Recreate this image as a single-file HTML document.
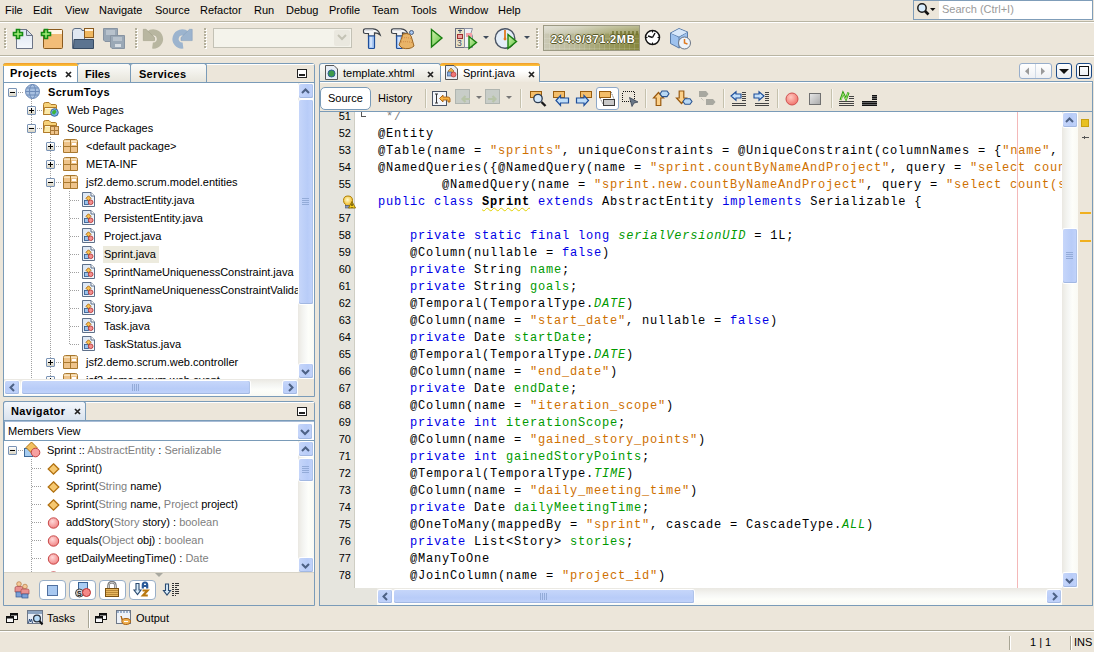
<!DOCTYPE html>
<html><head><meta charset="utf-8">
<style>
*{box-sizing:border-box;margin:0;padding:0}
html,body{width:1094px;height:652px;overflow:hidden;background:#ECE6DA;font-family:"Liberation Sans",sans-serif;font-size:11px;color:#000}
.a{position:absolute}
.t{position:absolute;white-space:nowrap;line-height:13px}
.c{position:absolute;white-space:pre;font-family:"Liberation Mono",monospace;font-size:12px;letter-spacing:0.8px;line-height:17px;color:#000}
.k{color:#0000E6}
.s{color:#CE7000}
.f{color:#009900}
.i{color:#009900;font-style:italic}
.g{color:#808080}
svg{position:absolute;overflow:visible}
</style></head><body>

<div class="t" style="left:5px;top:4px;">File</div>
<div class="t" style="left:33px;top:4px;">Edit</div>
<div class="t" style="left:65px;top:4px;">View</div>
<div class="t" style="left:99px;top:4px;">Navigate</div>
<div class="t" style="left:155px;top:4px;">Source</div>
<div class="t" style="left:200px;top:4px;">Refactor</div>
<div class="t" style="left:254px;top:4px;">Run</div>
<div class="t" style="left:286px;top:4px;">Debug</div>
<div class="t" style="left:329px;top:4px;">Profile</div>
<div class="t" style="left:372px;top:4px;">Team</div>
<div class="t" style="left:411px;top:4px;">Tools</div>
<div class="t" style="left:449px;top:4px;">Window</div>
<div class="t" style="left:498px;top:4px;">Help</div>
<div class="a" style="left:0px;top:21px;width:1094px;height:1px;background:#B9B5A3"></div>
<div class="a" style="left:0px;top:22px;width:1094px;height:1px;background:#FFFFFF"></div>
<div class="a" style="left:913px;top:0px;width:180px;height:20px;background:#fff;border:1px solid #7F9DB9"></div>
<div class="a" style="left:914px;top:1px;width:25px;height:18px;background:#ECE6DA"></div>
<svg style="left:916px;top:2px" width="22" height="15"><path d="M8.5 8.5 L12.5 12.5" stroke="#111" stroke-width="2.6"/><circle cx="6" cy="6" r="4.2" fill="#D8ECFC" stroke="#1A1A1A" stroke-width="1.5"/><path d="M14 6 H19.5 L16.75 9Z" fill="#111"/></svg>
<div class="t" style="left:942px;top:3px;color:#9A9A9A">Search (Ctrl+I)</div>
<div class="a" style="left:0px;top:55px;width:1094px;height:1px;background:#B9B5A3"></div>
<div class="a" style="left:0px;top:56px;width:1094px;height:1px;background:#FFFFFF"></div>
<div class="a" style="left:4px;top:28px;width:2px;height:2px;background:#B4B09C;box-shadow:1px 1px 0 #fff"></div>
<div class="a" style="left:4px;top:31px;width:2px;height:2px;background:#B4B09C;box-shadow:1px 1px 0 #fff"></div>
<div class="a" style="left:4px;top:34px;width:2px;height:2px;background:#B4B09C;box-shadow:1px 1px 0 #fff"></div>
<div class="a" style="left:4px;top:37px;width:2px;height:2px;background:#B4B09C;box-shadow:1px 1px 0 #fff"></div>
<div class="a" style="left:4px;top:40px;width:2px;height:2px;background:#B4B09C;box-shadow:1px 1px 0 #fff"></div>
<div class="a" style="left:4px;top:43px;width:2px;height:2px;background:#B4B09C;box-shadow:1px 1px 0 #fff"></div>
<div class="a" style="left:4px;top:46px;width:2px;height:2px;background:#B4B09C;box-shadow:1px 1px 0 #fff"></div>
<div class="a" style="left:135px;top:28px;width:2px;height:2px;background:#B4B09C;box-shadow:1px 1px 0 #fff"></div>
<div class="a" style="left:135px;top:31px;width:2px;height:2px;background:#B4B09C;box-shadow:1px 1px 0 #fff"></div>
<div class="a" style="left:135px;top:34px;width:2px;height:2px;background:#B4B09C;box-shadow:1px 1px 0 #fff"></div>
<div class="a" style="left:135px;top:37px;width:2px;height:2px;background:#B4B09C;box-shadow:1px 1px 0 #fff"></div>
<div class="a" style="left:135px;top:40px;width:2px;height:2px;background:#B4B09C;box-shadow:1px 1px 0 #fff"></div>
<div class="a" style="left:135px;top:43px;width:2px;height:2px;background:#B4B09C;box-shadow:1px 1px 0 #fff"></div>
<div class="a" style="left:135px;top:46px;width:2px;height:2px;background:#B4B09C;box-shadow:1px 1px 0 #fff"></div>
<div class="a" style="left:204px;top:28px;width:2px;height:2px;background:#B4B09C;box-shadow:1px 1px 0 #fff"></div>
<div class="a" style="left:204px;top:31px;width:2px;height:2px;background:#B4B09C;box-shadow:1px 1px 0 #fff"></div>
<div class="a" style="left:204px;top:34px;width:2px;height:2px;background:#B4B09C;box-shadow:1px 1px 0 #fff"></div>
<div class="a" style="left:204px;top:37px;width:2px;height:2px;background:#B4B09C;box-shadow:1px 1px 0 #fff"></div>
<div class="a" style="left:204px;top:40px;width:2px;height:2px;background:#B4B09C;box-shadow:1px 1px 0 #fff"></div>
<div class="a" style="left:204px;top:43px;width:2px;height:2px;background:#B4B09C;box-shadow:1px 1px 0 #fff"></div>
<div class="a" style="left:204px;top:46px;width:2px;height:2px;background:#B4B09C;box-shadow:1px 1px 0 #fff"></div>
<div class="a" style="left:536px;top:28px;width:2px;height:2px;background:#B4B09C;box-shadow:1px 1px 0 #fff"></div>
<div class="a" style="left:536px;top:31px;width:2px;height:2px;background:#B4B09C;box-shadow:1px 1px 0 #fff"></div>
<div class="a" style="left:536px;top:34px;width:2px;height:2px;background:#B4B09C;box-shadow:1px 1px 0 #fff"></div>
<div class="a" style="left:536px;top:37px;width:2px;height:2px;background:#B4B09C;box-shadow:1px 1px 0 #fff"></div>
<div class="a" style="left:536px;top:40px;width:2px;height:2px;background:#B4B09C;box-shadow:1px 1px 0 #fff"></div>
<div class="a" style="left:536px;top:43px;width:2px;height:2px;background:#B4B09C;box-shadow:1px 1px 0 #fff"></div>
<div class="a" style="left:536px;top:46px;width:2px;height:2px;background:#B4B09C;box-shadow:1px 1px 0 #fff"></div>
<svg style="left:12px;top:28px" width="22" height="22"><defs><linearGradient id="pg" x1="0" y1="0" x2="0" y2="1"><stop offset="0" stop-color="#DCE4F2"/><stop offset="1" stop-color="#F4F7FB"/></linearGradient></defs><path d="M4.5 1.5 H14.5 L20.5 7.5 V20.5 H4.5Z" fill="url(#pg)" stroke="#6C7486"/><path d="M14.5 1.5 V7.5 H20.5Z" fill="#D4DCEA" stroke="#6C7486"/><path d="M4.5 1.5 H7.5 V4.5 H10.5 V7.5 H7.5 V10.5 H4.5 V7.5 H1.5 V4.5 H4.5Z" fill="#A6EE7A" stroke="#138A13" stroke-width="1.6"/></svg>
<svg style="left:40px;top:28px" width="24" height="22"><rect x="3.5" y="1.5" width="19" height="19" rx="1" fill="#F2BD78" stroke="#8A5A1E"/><rect x="4" y="2" width="18" height="4" fill="#FFF6E6"/><path d="M4.5 1.5 H7.5 V4.5 H10.5 V7.5 H7.5 V10.5 H4.5 V7.5 H1.5 V4.5 H4.5Z" fill="#A6EE7A" stroke="#138A13" stroke-width="1.6"/></svg>
<svg style="left:72px;top:27px" width="24" height="23"><path d="M0.5 4.5 Q0.5 1.5 3 1.5 H8 Q10 1.5 10 3.5 H12.5 V21.5 H0.5Z" fill="#E0E8F2" stroke="#5E6E84"/><rect x="12.5" y="1.5" width="9" height="9" fill="#F0B860" stroke="#8A5A1E"/><rect x="13" y="2" width="8" height="2" fill="#FFF2DC"/><path d="M1.5 21.5 L2 12.5 H21.5 V21.5Z" fill="#5C7490" stroke="#364A62"/></svg>
<svg style="left:102px;top:27px" width="24" height="23"><path d="M1.5 1.5 H15.5 V14.5 H3 L1.5 13Z" fill="#9AA8B6" stroke="#8894A2"/><rect x="4" y="3" width="9" height="5" fill="#B8C2CC"/><path d="M8.5 8.5 H22.5 V21.5 H10 L8.5 20Z" fill="#9AA8B6" stroke="#8894A2"/><rect x="11" y="10" width="9" height="4" fill="#B8C2CC"/><rect x="13" y="17" width="6" height="3" fill="#D8DEE4"/></svg>
<svg style="left:142px;top:28px" width="23" height="22"><path d="M7 6 A6.6 6.6 0 1 1 10.5 17.5" fill="none" stroke="#B8B6A0" stroke-width="6.2"/><path d="M1.3 1.3 H4 L12.5 9.5 V12.6 H1.3Z" fill="#B8B6A0" stroke="#A09E86" stroke-width=".6"/></svg>
<svg style="left:171px;top:28px" width="24" height="22"><path d="M15.5 6 A6.6 6.6 0 1 0 12 17.5" fill="none" stroke="#9CB4CE" stroke-width="6.2"/><path d="M21.2 1.3 H18.5 L10 9.5 V12.6 H21.2Z" fill="#9CB4CE" stroke="#86A0BC" stroke-width=".6"/></svg>
<div class="a" style="left:213px;top:28px;width:139px;height:20px;background:#F4F3EB;border:1px solid #C3C1B5"></div>
<div class="a" style="left:334px;top:30px;width:16px;height:16px;background:#EAE8DF;border-radius:2px"></div>
<svg style="left:337px;top:34px" width="10" height="8"><path d="M1 1 L5 5 L9 1" fill="none" stroke="#C4C3B5" stroke-width="2"/></svg>
<svg style="left:362px;top:28px" width="20" height="22"><path d="M1.5 2.5 Q1.5 0.8 3.5 0.8 H11 Q16.5 1 18.2 7 Q15.5 4.6 12.5 4.8 V8 H6.5 V5.5 H3.5 Q1.5 5.5 1.5 4Z" fill="#F4F5F6" stroke="#3E434A" stroke-width="1.2"/><path d="M3 2 H11" stroke="#C8CCD2"/><path d="M6.5 8 H12.5 V19.5 Q12.5 20.5 11.5 20.5 H7.5 Q6.5 20.5 6.5 19.5Z" fill="#A8C8F4" stroke="#1E4E9A" stroke-width="1.2"/><path d="M9 9 V19" stroke="#E0ECFC" stroke-width="1.4"/></svg>
<svg style="left:390px;top:28px" width="26" height="22"><path d="M1.5 2.5 Q1.5 0.8 3.5 0.8 H11 Q16.5 1 18.2 7 Q15.5 4.6 12.5 4.8 V8 H6.5 V5.5 H3.5 Q1.5 5.5 1.5 4Z" fill="#F4F5F6" stroke="#3E434A" stroke-width="1.2"/><path d="M3 2 H11" stroke="#C8CCD2"/><path d="M6.5 8 H12.5 V19.5 Q12.5 20.5 11.5 20.5 H7.5 Q6.5 20.5 6.5 19.5Z" fill="#A8C8F4" stroke="#1E4E9A" stroke-width="1.2"/><path d="M9 9 V19" stroke="#E0ECFC" stroke-width="1.4"/><path d="M13 6 Q21 4 22 11 L24 18 Q20 22 12 20 L9 17 Q11 12 13 6Z" fill="#E8B468" stroke="#9A6420"/><path d="M12 10 Q18 9 22 11 M11 14 Q18 13 23 15" stroke="#C87838" stroke-width=".8" fill="none" stroke-dasharray="1 1"/><circle cx="21.5" cy="4.5" r="2" fill="#A8C8F0" stroke="#4A5E80"/></svg>
<svg style="left:430px;top:28px" width="14" height="21"><defs><linearGradient id="rg" x1="0" y1="0" x2="1" y2="1"><stop offset="0" stop-color="#D6F4B0"/><stop offset="1" stop-color="#5CC040"/></linearGradient></defs><path d="M1.5 1.5 L12 10 L1.5 19Z" fill="url(#rg)" stroke="#1A7E10" stroke-width="1.4"/></svg>
<svg style="left:454px;top:27px" width="26" height="23"><rect x="1.5" y="1.5" width="9" height="19" fill="#EAE4C8" stroke="#6A7080"/><path d="M10.5 1.5 H18.5 L17 6 L18.5 9 V20.5 H10.5Z" fill="#F0F2F6" stroke="#8A90A0"/><rect x="12" y="6" width="6" height="4" fill="#F4A0A8"/><rect x="3.5" y="7.5" width="5" height="4" fill="#E8A0A0" stroke="#A03030"/><path d="M6 2.5 V6 M4 3.5 H8" stroke="#3A4A6A"/><text x="3" y="19" font-size="8.5" font-family="Liberation Sans" fill="#3A4A6A">3</text><path d="M15 9.5 L22.5 15.5 L15 21.5Z" fill="url(#rg)" stroke="#1A7E10" stroke-width="1.4"/></svg>
<svg style="left:483px;top:36px" width="6" height="4"><path d="M0 0 H6 L3 3Z" fill="#3E4A5A"/></svg>
<svg style="left:494px;top:27px" width="26" height="23"><circle cx="11" cy="11.5" r="9.8" fill="#E4EEF8" stroke="#4A5464" stroke-width="1.4"/><path d="M11 3 V11.5" stroke="#E07A20" stroke-width="1.8"/><circle cx="11" cy="12" r="1.4" fill="#E07A20"/><path d="M14 7.5 L22.5 14.5 L14 21.5Z" fill="url(#rg)" stroke="#1A7E10" stroke-width="1.4"/></svg>
<svg style="left:524px;top:36px" width="6" height="4"><path d="M0 0 H6 L3 3Z" fill="#3E4A5A"/></svg>
<div class="a" style="left:543px;top:25px;width:97px;height:26px;background:linear-gradient(90deg,#CBC9B6 0%,#B9B896 35%,#9A9A5E 70%,#86863C 100%);border:1px solid #9C9A84"></div>
<div class="a" style="left:544px;top:26px;width:95px;height:7px;background:linear-gradient(rgba(255,255,255,.45),rgba(255,255,255,.2))"></div>
<div class="a" style="left:544px;top:33px;width:95px;height:17px;background:repeating-linear-gradient(90deg,rgba(255,255,255,.12) 0 1px,transparent 1px 5px),repeating-linear-gradient(rgba(255,255,255,.12) 0 1px,transparent 1px 5px)"></div>
<div class="a" style="left:612px;top:31px;width:27px;height:4px;background:repeating-linear-gradient(90deg,rgba(110,110,40,.7) 0 2px,transparent 2px 4px)"></div>
<div class="t" style="left:551px;top:33px;color:#fff;font-weight:bold;letter-spacing:0.7px;text-shadow:1px 0 0 #5A5A28,-1px 0 0 #5A5A28,0 1px 0 #5A5A28,0 -1px 0 #5A5A28">234.9/371.2MB</div>
<svg style="left:644px;top:29px" width="18" height="18"><circle cx="8.5" cy="8.5" r="7" fill="#fff" stroke="#111" stroke-width="1.5"/><path d="M8.5 8.5 L4 7 M8.5 8.5 L11 4" fill="none" stroke="#111" stroke-width="1.4"/><path d="M8.5 2 V3.5 M15 8.5 H13.5 M8.5 15 V13.5 M2 8.5 H3.5" stroke="#111"/></svg>
<svg style="left:668px;top:27px" width="24" height="23"><path d="M2.5 6 L11 1.5 L19.5 5 V16 L11 21 L2.5 16.5Z" fill="#9EC2EE" stroke="#5A7CA8"/><path d="M2.5 6 L11 10 L19.5 5 M11 10 V21" fill="none" stroke="#5A7CA8"/><path d="M3 6.2 L11 2 L19 5.2 L11 9.5Z" fill="#D8E8FA"/><circle cx="16.5" cy="16" r="6" fill="#EEF4FA" stroke="#6A7484"/><path d="M16.5 12 V16 L19.5 17" fill="none" stroke="#E07A20" stroke-width="1.5"/></svg>
<div class="a" style="left:3px;top:63px;width:312px;height:334px;border:1px solid #7A9BB8;background:#ECE6DA;border-radius:3px 3px 0 0"></div>
<div class="a" style="left:4px;top:64px;width:310px;height:1px;background:#fff"></div>
<div class="a" style="left:77px;top:63px;width:54px;height:20px;background:linear-gradient(#FBFBF9,#E6E4DA);border:1px solid #7A9BB8;border-bottom:none;border-radius:3px 3px 0 0"></div>
<div class="t" style="left:85px;top:68px;font-weight:bold">Files</div>
<div class="a" style="left:130px;top:63px;width:77px;height:20px;background:linear-gradient(#FBFBF9,#E6E4DA);border:1px solid #7A9BB8;border-bottom:none;border-radius:3px 3px 0 0"></div>
<div class="t" style="left:139px;top:68px;font-weight:bold;letter-spacing:0.25px">Services</div>
<div class="a" style="left:3px;top:63px;width:75px;height:20px;background:#fff;border:1px solid #7A9BB8;border-top:none;border-bottom:none;border-radius:3px 3px 0 0"></div>
<div class="a" style="left:3px;top:63px;width:75px;height:3px;background:linear-gradient(#EE9A2A,#FFC83C);border-radius:3px 3px 0 0"></div>
<div class="t" style="left:10px;top:67px;font-weight:bold;letter-spacing:0.5px">Projects</div>
<svg style="left:65px;top:71px" width="8" height="8"><path d="M1 1 L6 6 M6 1 L1 6" stroke="#222" stroke-width="1.7"/></svg>
<div class="a" style="left:4px;top:82px;width:310px;height:1px;background:#7A9BB8"></div>
<div class="a" style="left:297px;top:69px;width:10px;height:9px;border:1px solid #222;background:#fff"></div>
<div class="a" style="left:299px;top:74px;width:6px;height:2px;background:#222"></div>
<div class="a" style="left:4px;top:83px;width:294px;height:296px;background:#fff"></div>
<div class="a" style="left:31px;top:99px;width:1px;height:280px;background:repeating-linear-gradient(#A0A0A0 0 1px,transparent 1px 2px)"></div>
<div class="a" style="left:50px;top:137px;width:1px;height:243px;background:repeating-linear-gradient(#A0A0A0 0 1px,transparent 1px 2px)"></div>
<div class="a" style="left:69px;top:191px;width:1px;height:153px;background:repeating-linear-gradient(#A0A0A0 0 1px,transparent 1px 2px)"></div>
<div class="a" style="left:8px;top:88px;width:9px;height:9px;border:1px solid #7A93B5;background:linear-gradient(#fff,#D8D4C4);border-radius:1px"></div>
<div class="a" style="left:10px;top:92px;width:5px;height:1px;background:#000"></div>
<div class="a" style="left:18px;top:92px;width:6px;height:1px;background:repeating-linear-gradient(90deg,#A0A0A0 0 1px,transparent 1px 2px)"></div>
<svg style="left:25px;top:84px" width="16" height="15"><circle cx="7.5" cy="7.5" r="7" fill="#A8C0E0" stroke="#6D8BB8"/><ellipse cx="7.5" cy="7.5" rx="3" ry="7" fill="none" stroke="#6D8BB8"/><path d="M0.5 7.5 H14.5 M1.5 4 H13.5 M1.5 11 H13.5" stroke="#6D8BB8"/></svg>
<div class="t" style="left:48px;top:86px;font-weight:bold;letter-spacing:0.3px">ScrumToys</div>
<div class="a" style="left:27px;top:106px;width:9px;height:9px;border:1px solid #7A93B5;background:linear-gradient(#fff,#D8D4C4);border-radius:1px"></div>
<div class="a" style="left:29px;top:110px;width:5px;height:1px;background:#000"></div>
<div class="a" style="left:31px;top:108px;width:1px;height:5px;background:#000"></div>
<div class="a" style="left:37px;top:110px;width:5px;height:1px;background:repeating-linear-gradient(90deg,#A0A0A0 0 1px,transparent 1px 2px)"></div>
<svg style="left:43px;top:102px" width="16" height="15"><path d="M0.5 2.5 Q0.5 0.5 2.5 0.5 H6 L8 2.5 H12.5 Q13.5 2.5 13.5 4 V12.5 H0.5Z" fill="#F6D27A" stroke="#B07A28"/><path d="M1.5 5.5 H13.5 L12.5 12.5 H0.5Z" fill="#FBE9A8" stroke="#B07A28"/><path d="M2 6.5 H12.5" stroke="#FFF6D8"/></svg>
<svg style="left:50px;top:108px" width="9" height="9"><circle cx="4.5" cy="4.5" r="3.8" fill="#70B0E8" stroke="#3A6AA0"/><path d="M2 4 Q3 1.5 5.5 2 L6.5 4 L4.5 6.5 L2.5 6Z" fill="#3CB43C"/></svg>
<div class="t" style="left:67px;top:104px;">Web Pages</div>
<div class="a" style="left:27px;top:124px;width:9px;height:9px;border:1px solid #7A93B5;background:linear-gradient(#fff,#D8D4C4);border-radius:1px"></div>
<div class="a" style="left:29px;top:128px;width:5px;height:1px;background:#000"></div>
<div class="a" style="left:37px;top:128px;width:5px;height:1px;background:repeating-linear-gradient(90deg,#A0A0A0 0 1px,transparent 1px 2px)"></div>
<svg style="left:43px;top:120px" width="16" height="15"><path d="M0.5 2.5 Q0.5 0.5 2.5 0.5 H6 L8 2.5 H12.5 Q13.5 2.5 13.5 4 V12.5 H0.5Z" fill="#F6D27A" stroke="#B07A28"/><path d="M1.5 5.5 H13.5 L12.5 12.5 H0.5Z" fill="#FBE9A8" stroke="#B07A28"/><path d="M2 6.5 H12.5" stroke="#FFF6D8"/></svg>
<svg style="left:50px;top:126px" width="9" height="9"><rect x="0.5" y="0.5" width="8" height="8" fill="#EEC38A" stroke="#A87838"/><path d="M4.5 0.5 V8.5 M0.5 4.5 H8.5" stroke="#A87838"/></svg>
<div class="t" style="left:67px;top:122px;">Source Packages</div>
<div class="a" style="left:46px;top:142px;width:9px;height:9px;border:1px solid #7A93B5;background:linear-gradient(#fff,#D8D4C4);border-radius:1px"></div>
<div class="a" style="left:48px;top:146px;width:5px;height:1px;background:#000"></div>
<div class="a" style="left:50px;top:144px;width:1px;height:5px;background:#000"></div>
<div class="a" style="left:56px;top:146px;width:6px;height:1px;background:repeating-linear-gradient(90deg,#A0A0A0 0 1px,transparent 1px 2px)"></div>
<svg style="left:63px;top:139px" width="16" height="16"><path d="M0.5 2.5 Q0.5 0.5 2.5 0.5 H12.5 Q14.5 0.5 14.5 2.5 V13.5 H0.5Z" fill="#EEC38A" stroke="#A8782E"/><path d="M1 1.5 H14 V3 H1Z" fill="#F8E4C0"/><path d="M7.5 1 V13.5 M0.5 7.5 H14.5" stroke="#A8782E"/><rect x="9" y="4" width="4" height="2" fill="#fff"/></svg>
<div class="t" style="left:86px;top:140px;">&lt;default package&gt;</div>
<div class="a" style="left:46px;top:160px;width:9px;height:9px;border:1px solid #7A93B5;background:linear-gradient(#fff,#D8D4C4);border-radius:1px"></div>
<div class="a" style="left:48px;top:164px;width:5px;height:1px;background:#000"></div>
<div class="a" style="left:50px;top:162px;width:1px;height:5px;background:#000"></div>
<div class="a" style="left:56px;top:164px;width:6px;height:1px;background:repeating-linear-gradient(90deg,#A0A0A0 0 1px,transparent 1px 2px)"></div>
<svg style="left:63px;top:157px" width="16" height="16"><path d="M0.5 2.5 Q0.5 0.5 2.5 0.5 H12.5 Q14.5 0.5 14.5 2.5 V13.5 H0.5Z" fill="#EEC38A" stroke="#A8782E"/><path d="M1 1.5 H14 V3 H1Z" fill="#F8E4C0"/><path d="M7.5 1 V13.5 M0.5 7.5 H14.5" stroke="#A8782E"/><rect x="9" y="4" width="4" height="2" fill="#fff"/></svg>
<div class="t" style="left:86px;top:158px;">META-INF</div>
<div class="a" style="left:46px;top:178px;width:9px;height:9px;border:1px solid #7A93B5;background:linear-gradient(#fff,#D8D4C4);border-radius:1px"></div>
<div class="a" style="left:48px;top:182px;width:5px;height:1px;background:#000"></div>
<div class="a" style="left:56px;top:182px;width:6px;height:1px;background:repeating-linear-gradient(90deg,#A0A0A0 0 1px,transparent 1px 2px)"></div>
<svg style="left:63px;top:175px" width="16" height="16"><path d="M0.5 2.5 Q0.5 0.5 2.5 0.5 H12.5 Q14.5 0.5 14.5 2.5 V13.5 H0.5Z" fill="#EEC38A" stroke="#A8782E"/><path d="M1 1.5 H14 V3 H1Z" fill="#F8E4C0"/><path d="M7.5 1 V13.5 M0.5 7.5 H14.5" stroke="#A8782E"/><rect x="9" y="4" width="4" height="2" fill="#fff"/></svg>
<div class="t" style="left:86px;top:176px;">jsf2.demo.scrum.model.entities</div>
<div class="a" style="left:70px;top:200px;width:10px;height:1px;background:repeating-linear-gradient(90deg,#A0A0A0 0 1px,transparent 1px 2px)"></div>
<svg style="left:82px;top:192px" width="16" height="16"><defs><linearGradient id="jf" x1="0" y1="0" x2="1" y2="1"><stop offset="0" stop-color="#D8E4F4"/><stop offset="1" stop-color="#F8FAFC"/></linearGradient></defs><path d="M0.5 0.5 H9 L12.5 4 V14.5 H0.5Z" fill="url(#jf)" stroke="#5E708A"/><path d="M9 0.5 V4 H12.5" fill="#FFFFFF" stroke="#5E708A"/><rect x="2.5" y="8.5" width="4" height="4" fill="#9CC4EC" stroke="#3A6294" stroke-width=".9"/><path d="M6.5 3.8 L9 6.3 L6.5 8.8 L4 6.3Z" fill="#F8C050" stroke="#A86410" stroke-width=".9"/><circle cx="8.7" cy="10.3" r="2.3" fill="#F49090" stroke="#B83838" stroke-width=".9"/></svg>
<div class="t" style="left:104px;top:194px;">AbstractEntity.java</div>
<div class="a" style="left:70px;top:218px;width:10px;height:1px;background:repeating-linear-gradient(90deg,#A0A0A0 0 1px,transparent 1px 2px)"></div>
<svg style="left:82px;top:210px" width="16" height="16"><defs><linearGradient id="jf" x1="0" y1="0" x2="1" y2="1"><stop offset="0" stop-color="#D8E4F4"/><stop offset="1" stop-color="#F8FAFC"/></linearGradient></defs><path d="M0.5 0.5 H9 L12.5 4 V14.5 H0.5Z" fill="url(#jf)" stroke="#5E708A"/><path d="M9 0.5 V4 H12.5" fill="#FFFFFF" stroke="#5E708A"/><rect x="2.5" y="8.5" width="4" height="4" fill="#9CC4EC" stroke="#3A6294" stroke-width=".9"/><path d="M6.5 3.8 L9 6.3 L6.5 8.8 L4 6.3Z" fill="#F8C050" stroke="#A86410" stroke-width=".9"/><circle cx="8.7" cy="10.3" r="2.3" fill="#F49090" stroke="#B83838" stroke-width=".9"/></svg>
<div class="t" style="left:104px;top:212px;">PersistentEntity.java</div>
<div class="a" style="left:70px;top:236px;width:10px;height:1px;background:repeating-linear-gradient(90deg,#A0A0A0 0 1px,transparent 1px 2px)"></div>
<svg style="left:82px;top:228px" width="16" height="16"><defs><linearGradient id="jf" x1="0" y1="0" x2="1" y2="1"><stop offset="0" stop-color="#D8E4F4"/><stop offset="1" stop-color="#F8FAFC"/></linearGradient></defs><path d="M0.5 0.5 H9 L12.5 4 V14.5 H0.5Z" fill="url(#jf)" stroke="#5E708A"/><path d="M9 0.5 V4 H12.5" fill="#FFFFFF" stroke="#5E708A"/><rect x="2.5" y="8.5" width="4" height="4" fill="#9CC4EC" stroke="#3A6294" stroke-width=".9"/><path d="M6.5 3.8 L9 6.3 L6.5 8.8 L4 6.3Z" fill="#F8C050" stroke="#A86410" stroke-width=".9"/><circle cx="8.7" cy="10.3" r="2.3" fill="#F49090" stroke="#B83838" stroke-width=".9"/></svg>
<div class="t" style="left:104px;top:230px;">Project.java</div>
<div class="a" style="left:70px;top:254px;width:10px;height:1px;background:repeating-linear-gradient(90deg,#A0A0A0 0 1px,transparent 1px 2px)"></div>
<svg style="left:82px;top:246px" width="16" height="16"><defs><linearGradient id="jf" x1="0" y1="0" x2="1" y2="1"><stop offset="0" stop-color="#D8E4F4"/><stop offset="1" stop-color="#F8FAFC"/></linearGradient></defs><path d="M0.5 0.5 H9 L12.5 4 V14.5 H0.5Z" fill="url(#jf)" stroke="#5E708A"/><path d="M9 0.5 V4 H12.5" fill="#FFFFFF" stroke="#5E708A"/><rect x="2.5" y="8.5" width="4" height="4" fill="#9CC4EC" stroke="#3A6294" stroke-width=".9"/><path d="M6.5 3.8 L9 6.3 L6.5 8.8 L4 6.3Z" fill="#F8C050" stroke="#A86410" stroke-width=".9"/><circle cx="8.7" cy="10.3" r="2.3" fill="#F49090" stroke="#B83838" stroke-width=".9"/></svg>
<div class="a" style="left:103px;top:246px;width:56px;height:17px;background:#EDEBDE"></div>
<div class="t" style="left:104px;top:248px;">Sprint.java</div>
<div class="a" style="left:70px;top:272px;width:10px;height:1px;background:repeating-linear-gradient(90deg,#A0A0A0 0 1px,transparent 1px 2px)"></div>
<svg style="left:82px;top:264px" width="16" height="16"><defs><linearGradient id="jf" x1="0" y1="0" x2="1" y2="1"><stop offset="0" stop-color="#D8E4F4"/><stop offset="1" stop-color="#F8FAFC"/></linearGradient></defs><path d="M0.5 0.5 H9 L12.5 4 V14.5 H0.5Z" fill="url(#jf)" stroke="#5E708A"/><path d="M9 0.5 V4 H12.5" fill="#FFFFFF" stroke="#5E708A"/><rect x="2.5" y="8.5" width="4" height="4" fill="#9CC4EC" stroke="#3A6294" stroke-width=".9"/><path d="M6.5 3.8 L9 6.3 L6.5 8.8 L4 6.3Z" fill="#F8C050" stroke="#A86410" stroke-width=".9"/><circle cx="8.7" cy="10.3" r="2.3" fill="#F49090" stroke="#B83838" stroke-width=".9"/></svg>
<div class="t" style="left:104px;top:266px;">SprintNameUniquenessConstraint.java</div>
<div class="a" style="left:70px;top:290px;width:10px;height:1px;background:repeating-linear-gradient(90deg,#A0A0A0 0 1px,transparent 1px 2px)"></div>
<svg style="left:82px;top:282px" width="16" height="16"><defs><linearGradient id="jf" x1="0" y1="0" x2="1" y2="1"><stop offset="0" stop-color="#D8E4F4"/><stop offset="1" stop-color="#F8FAFC"/></linearGradient></defs><path d="M0.5 0.5 H9 L12.5 4 V14.5 H0.5Z" fill="url(#jf)" stroke="#5E708A"/><path d="M9 0.5 V4 H12.5" fill="#FFFFFF" stroke="#5E708A"/><rect x="2.5" y="8.5" width="4" height="4" fill="#9CC4EC" stroke="#3A6294" stroke-width=".9"/><path d="M6.5 3.8 L9 6.3 L6.5 8.8 L4 6.3Z" fill="#F8C050" stroke="#A86410" stroke-width=".9"/><circle cx="8.7" cy="10.3" r="2.3" fill="#F49090" stroke="#B83838" stroke-width=".9"/></svg>
<div class="t" style="left:104px;top:284px;">SprintNameUniquenessConstraintValidat</div>
<div class="a" style="left:70px;top:308px;width:10px;height:1px;background:repeating-linear-gradient(90deg,#A0A0A0 0 1px,transparent 1px 2px)"></div>
<svg style="left:82px;top:300px" width="16" height="16"><defs><linearGradient id="jf" x1="0" y1="0" x2="1" y2="1"><stop offset="0" stop-color="#D8E4F4"/><stop offset="1" stop-color="#F8FAFC"/></linearGradient></defs><path d="M0.5 0.5 H9 L12.5 4 V14.5 H0.5Z" fill="url(#jf)" stroke="#5E708A"/><path d="M9 0.5 V4 H12.5" fill="#FFFFFF" stroke="#5E708A"/><rect x="2.5" y="8.5" width="4" height="4" fill="#9CC4EC" stroke="#3A6294" stroke-width=".9"/><path d="M6.5 3.8 L9 6.3 L6.5 8.8 L4 6.3Z" fill="#F8C050" stroke="#A86410" stroke-width=".9"/><circle cx="8.7" cy="10.3" r="2.3" fill="#F49090" stroke="#B83838" stroke-width=".9"/></svg>
<div class="t" style="left:104px;top:302px;">Story.java</div>
<div class="a" style="left:70px;top:326px;width:10px;height:1px;background:repeating-linear-gradient(90deg,#A0A0A0 0 1px,transparent 1px 2px)"></div>
<svg style="left:82px;top:318px" width="16" height="16"><defs><linearGradient id="jf" x1="0" y1="0" x2="1" y2="1"><stop offset="0" stop-color="#D8E4F4"/><stop offset="1" stop-color="#F8FAFC"/></linearGradient></defs><path d="M0.5 0.5 H9 L12.5 4 V14.5 H0.5Z" fill="url(#jf)" stroke="#5E708A"/><path d="M9 0.5 V4 H12.5" fill="#FFFFFF" stroke="#5E708A"/><rect x="2.5" y="8.5" width="4" height="4" fill="#9CC4EC" stroke="#3A6294" stroke-width=".9"/><path d="M6.5 3.8 L9 6.3 L6.5 8.8 L4 6.3Z" fill="#F8C050" stroke="#A86410" stroke-width=".9"/><circle cx="8.7" cy="10.3" r="2.3" fill="#F49090" stroke="#B83838" stroke-width=".9"/></svg>
<div class="t" style="left:104px;top:320px;">Task.java</div>
<div class="a" style="left:70px;top:344px;width:10px;height:1px;background:repeating-linear-gradient(90deg,#A0A0A0 0 1px,transparent 1px 2px)"></div>
<svg style="left:82px;top:336px" width="16" height="16"><defs><linearGradient id="jf" x1="0" y1="0" x2="1" y2="1"><stop offset="0" stop-color="#D8E4F4"/><stop offset="1" stop-color="#F8FAFC"/></linearGradient></defs><path d="M0.5 0.5 H9 L12.5 4 V14.5 H0.5Z" fill="url(#jf)" stroke="#5E708A"/><path d="M9 0.5 V4 H12.5" fill="#FFFFFF" stroke="#5E708A"/><rect x="2.5" y="8.5" width="4" height="4" fill="#9CC4EC" stroke="#3A6294" stroke-width=".9"/><path d="M6.5 3.8 L9 6.3 L6.5 8.8 L4 6.3Z" fill="#F8C050" stroke="#A86410" stroke-width=".9"/><circle cx="8.7" cy="10.3" r="2.3" fill="#F49090" stroke="#B83838" stroke-width=".9"/></svg>
<div class="t" style="left:104px;top:338px;">TaskStatus.java</div>
<div class="a" style="left:46px;top:358px;width:9px;height:9px;border:1px solid #7A93B5;background:linear-gradient(#fff,#D8D4C4);border-radius:1px"></div>
<div class="a" style="left:48px;top:362px;width:5px;height:1px;background:#000"></div>
<div class="a" style="left:50px;top:360px;width:1px;height:5px;background:#000"></div>
<div class="a" style="left:56px;top:362px;width:6px;height:1px;background:repeating-linear-gradient(90deg,#A0A0A0 0 1px,transparent 1px 2px)"></div>
<svg style="left:63px;top:355px" width="16" height="16"><path d="M0.5 2.5 Q0.5 0.5 2.5 0.5 H12.5 Q14.5 0.5 14.5 2.5 V13.5 H0.5Z" fill="#EEC38A" stroke="#A8782E"/><path d="M1 1.5 H14 V3 H1Z" fill="#F8E4C0"/><path d="M7.5 1 V13.5 M0.5 7.5 H14.5" stroke="#A8782E"/><rect x="9" y="4" width="4" height="2" fill="#fff"/></svg>
<div class="t" style="left:86px;top:356px;">jsf2.demo.scrum.web.controller</div>
<div class="a" style="left:46px;top:376px;width:9px;height:9px;border:1px solid #7A93B5;background:linear-gradient(#fff,#D8D4C4);border-radius:1px"></div>
<div class="a" style="left:48px;top:380px;width:5px;height:1px;background:#000"></div>
<div class="a" style="left:50px;top:378px;width:1px;height:5px;background:#000"></div>
<div class="a" style="left:56px;top:380px;width:6px;height:1px;background:repeating-linear-gradient(90deg,#A0A0A0 0 1px,transparent 1px 2px)"></div>
<svg style="left:63px;top:373px" width="16" height="16"><path d="M0.5 2.5 Q0.5 0.5 2.5 0.5 H12.5 Q14.5 0.5 14.5 2.5 V13.5 H0.5Z" fill="#EEC38A" stroke="#A8782E"/><path d="M1 1.5 H14 V3 H1Z" fill="#F8E4C0"/><path d="M7.5 1 V13.5 M0.5 7.5 H14.5" stroke="#A8782E"/><rect x="9" y="4" width="4" height="2" fill="#fff"/></svg>
<div class="t" style="left:86px;top:374px;">jsf2.demo.scrum.web.event</div>
<div class="a" style="left:298px;top:83px;width:16px;height:296px;background:linear-gradient(90deg,#EAE8E2,#F2F2EE 25%,#F7F8F6 45%,#FDFEFA 65%,#FAFAF4)"></div>
<div class="a" style="left:299px;top:84px;width:14px;height:14px;background:linear-gradient(90deg,#C6D6FA,#B8CCF8 60%,#C2D3FA);border-radius:2px;box-shadow:0 0 0 1px #fff,inset 0 -1px 0 #A2B8E2,inset -1px 0 0 #B0C4EA"></div>
<svg style="left:301px;top:88px" width="9" height="6"><path d="M1 5 L4.5 1.5 L8 5" fill="none" stroke="#4D6185" stroke-width="2"/></svg>
<div class="a" style="left:299px;top:100px;width:14px;height:204px;background:linear-gradient(90deg,#C6D6FA,#B8CCF8 60%,#C2D3FA);border-radius:2px;box-shadow:0 0 0 1px #fff,inset 0 -1px 0 #A2B8E2,inset -1px 0 0 #B0C4EA"></div>
<div class="a" style="left:302px;top:198px;width:7px;height:1px;background:#93ABD8"></div>
<div class="a" style="left:302px;top:200px;width:7px;height:1px;background:#93ABD8"></div>
<div class="a" style="left:302px;top:202px;width:7px;height:1px;background:#93ABD8"></div>
<div class="a" style="left:302px;top:204px;width:7px;height:1px;background:#93ABD8"></div>
<div class="a" style="left:299px;top:364px;width:14px;height:14px;background:linear-gradient(90deg,#C6D6FA,#B8CCF8 60%,#C2D3FA);border-radius:2px;box-shadow:0 0 0 1px #fff,inset 0 -1px 0 #A2B8E2,inset -1px 0 0 #B0C4EA"></div>
<svg style="left:301px;top:369px" width="9" height="6"><path d="M1 1 L4.5 4.5 L8 1" fill="none" stroke="#4D6185" stroke-width="2"/></svg>
<div class="a" style="left:4px;top:379px;width:294px;height:17px;background:linear-gradient(#EAE8E2,#F2F2EE 25%,#F7F8F6 45%,#FDFEFA 65%,#FAFAF4)"></div>
<div class="a" style="left:5px;top:381px;width:14px;height:13px;background:linear-gradient(#C6D6FA,#B8CCF8 60%,#C2D3FA);border-radius:2px;box-shadow:0 0 0 1px #fff,inset 0 -1px 0 #A2B8E2,inset -1px 0 0 #B0C4EA"></div>
<svg style="left:9px;top:383px" width="6" height="9"><path d="M5 1 L1.5 4.5 L5 8" fill="none" stroke="#4D6185" stroke-width="2"/></svg>
<div class="a" style="left:22px;top:381px;width:228px;height:13px;background:linear-gradient(#C6D6FA,#B8CCF8 60%,#C2D3FA);border-radius:2px;box-shadow:0 0 0 1px #fff,inset 0 -1px 0 #A2B8E2,inset -1px 0 0 #B0C4EA"></div>
<div class="a" style="left:132px;top:384px;width:1px;height:7px;background:#93ABD8"></div>
<div class="a" style="left:134px;top:384px;width:1px;height:7px;background:#93ABD8"></div>
<div class="a" style="left:136px;top:384px;width:1px;height:7px;background:#93ABD8"></div>
<div class="a" style="left:138px;top:384px;width:1px;height:7px;background:#93ABD8"></div>
<div class="a" style="left:283px;top:381px;width:14px;height:13px;background:linear-gradient(#C6D6FA,#B8CCF8 60%,#C2D3FA);border-radius:2px;box-shadow:0 0 0 1px #fff,inset 0 -1px 0 #A2B8E2,inset -1px 0 0 #B0C4EA"></div>
<svg style="left:288px;top:383px" width="6" height="9"><path d="M1 1 L4.5 4.5 L1 8" fill="none" stroke="#4D6185" stroke-width="2"/></svg>
<div class="a" style="left:298px;top:379px;width:16px;height:17px;background:#ECE6DA"></div>
<div class="a" style="left:3px;top:401px;width:312px;height:205px;border:1px solid #7A9BB8;background:#ECE6DA;border-radius:3px 3px 0 0"></div>
<div class="a" style="left:4px;top:402px;width:310px;height:1px;background:#fff"></div>
<div class="a" style="left:3px;top:401px;width:83px;height:20px;background:linear-gradient(#F4F7FB,#D8E2EE);border:1px solid #7A9BB8;border-bottom:none;border-radius:3px 3px 0 0"></div>
<div class="t" style="left:11px;top:405px;font-weight:bold;letter-spacing:0.4px">Navigator</div>
<svg style="left:74px;top:408px" width="8" height="8"><path d="M1 1 L6 6 M6 1 L1 6" stroke="#222" stroke-width="1.7"/></svg>
<div class="a" style="left:297px;top:407px;width:10px;height:9px;border:1px solid #222;background:#fff"></div>
<div class="a" style="left:299px;top:412px;width:6px;height:2px;background:#222"></div>
<div class="a" style="left:4px;top:420px;width:310px;height:1px;background:#7A9BB8"></div>
<div class="a" style="left:4px;top:421px;width:310px;height:20px;background:#fff;border:1px solid #7A9BB8;border-right:none;border-top-color:#A8BCD6"></div>
<div class="t" style="left:8px;top:425px;">Members View</div>
<div class="a" style="left:298px;top:424px;width:14px;height:15px;background:linear-gradient(90deg,#C6D6FA,#B8CCF8 60%,#C2D3FA);border-radius:2px;box-shadow:0 0 0 1px #fff,inset 0 -1px 0 #A2B8E2,inset -1px 0 0 #B0C4EA"></div>
<svg style="left:300px;top:429px" width="10" height="7"><path d="M1 1 L5 5 L9 1" fill="none" stroke="#4D6185" stroke-width="2"/></svg>
<div class="a" style="left:4px;top:441px;width:294px;height:132px;background:#fff"></div>
<div class="a" style="left:8px;top:446px;width:9px;height:9px;border:1px solid #7A93B5;background:linear-gradient(#fff,#D8D4C4);border-radius:1px"></div>
<div class="a" style="left:10px;top:450px;width:5px;height:1px;background:#000"></div>
<div class="a" style="left:18px;top:450px;width:6px;height:1px;background:repeating-linear-gradient(90deg,#A0A0A0 0 1px,transparent 1px 2px)"></div>
<svg style="left:24px;top:441px" width="17" height="17"><rect x="0.5" y="7.5" width="8" height="8" fill="#A6CCF0" stroke="#3E6898"/><path d="M7.5 1 L13 6.5 L7.5 12 L2 6.5Z" fill="#F2C060" stroke="#B07410"/><circle cx="11.5" cy="11.5" r="4.3" fill="#F6A0A0" stroke="#C04040"/></svg>
<div class="t" style="left:47px;top:444px;">Sprint :: <span class="g">AbstractEntity</span> : <span class="g">Serializable</span></div>
<div class="a" style="left:31px;top:459px;width:1px;height:114px;background:repeating-linear-gradient(#A0A0A0 0 1px,transparent 1px 2px)"></div>
<div class="a" style="left:32px;top:468px;width:10px;height:1px;background:repeating-linear-gradient(90deg,#A0A0A0 0 1px,transparent 1px 2px)"></div>
<svg style="left:47px;top:463px" width="13" height="13"><path d="M6.5 0.8 L11.8 6 L6.5 11.2 L1.2 6Z" fill="#F6C870" stroke="#B07010" stroke-width="1.3"/></svg>
<div class="t" style="left:66px;top:462px;">Sprint()</div>
<div class="a" style="left:32px;top:486px;width:10px;height:1px;background:repeating-linear-gradient(90deg,#A0A0A0 0 1px,transparent 1px 2px)"></div>
<svg style="left:47px;top:481px" width="13" height="13"><path d="M6.5 0.8 L11.8 6 L6.5 11.2 L1.2 6Z" fill="#F6C870" stroke="#B07010" stroke-width="1.3"/></svg>
<div class="t" style="left:66px;top:480px;">Sprint(<span class="g">String</span> name)</div>
<div class="a" style="left:32px;top:504px;width:10px;height:1px;background:repeating-linear-gradient(90deg,#A0A0A0 0 1px,transparent 1px 2px)"></div>
<svg style="left:47px;top:499px" width="13" height="13"><path d="M6.5 0.8 L11.8 6 L6.5 11.2 L1.2 6Z" fill="#F6C870" stroke="#B07010" stroke-width="1.3"/></svg>
<div class="t" style="left:66px;top:498px;">Sprint(<span class="g">String</span> name, <span class="g">Project</span> project)</div>
<div class="a" style="left:32px;top:522px;width:10px;height:1px;background:repeating-linear-gradient(90deg,#A0A0A0 0 1px,transparent 1px 2px)"></div>
<svg style="left:47px;top:517px" width="13" height="13"><defs><radialGradient id="rc" cx=".4" cy=".35" r=".7"><stop offset="0" stop-color="#FFD8D8"/><stop offset="1" stop-color="#F08080"/></radialGradient></defs><circle cx="6.5" cy="6" r="5.2" fill="url(#rc)" stroke="#C84848"/></svg>
<div class="t" style="left:66px;top:516px;">addStory(<span class="g">Story</span> story) : <span class="g">boolean</span></div>
<div class="a" style="left:32px;top:540px;width:10px;height:1px;background:repeating-linear-gradient(90deg,#A0A0A0 0 1px,transparent 1px 2px)"></div>
<svg style="left:47px;top:535px" width="13" height="13"><defs><radialGradient id="rc" cx=".4" cy=".35" r=".7"><stop offset="0" stop-color="#FFD8D8"/><stop offset="1" stop-color="#F08080"/></radialGradient></defs><circle cx="6.5" cy="6" r="5.2" fill="url(#rc)" stroke="#C84848"/></svg>
<div class="t" style="left:66px;top:534px;">equals(<span class="g">Object</span> obj) : <span class="g">boolean</span></div>
<div class="a" style="left:32px;top:558px;width:10px;height:1px;background:repeating-linear-gradient(90deg,#A0A0A0 0 1px,transparent 1px 2px)"></div>
<svg style="left:47px;top:553px" width="13" height="13"><defs><radialGradient id="rc" cx=".4" cy=".35" r=".7"><stop offset="0" stop-color="#FFD8D8"/><stop offset="1" stop-color="#F08080"/></radialGradient></defs><circle cx="6.5" cy="6" r="5.2" fill="url(#rc)" stroke="#C84848"/></svg>
<div class="t" style="left:66px;top:552px;">getDailyMeetingTime() : <span class="g">Date</span></div>
<div class="a" style="left:32px;top:576px;width:10px;height:1px;background:repeating-linear-gradient(90deg,#A0A0A0 0 1px,transparent 1px 2px)"></div>
<svg style="left:47px;top:571px" width="13" height="13"><defs><radialGradient id="rc" cx=".4" cy=".35" r=".7"><stop offset="0" stop-color="#FFD8D8"/><stop offset="1" stop-color="#F08080"/></radialGradient></defs><circle cx="6.5" cy="6" r="5.2" fill="url(#rc)" stroke="#C84848"/></svg>
<div class="t" style="left:66px;top:570px;">getEndDate() : <span class="g">Date</span></div>
<div class="a" style="left:298px;top:441px;width:16px;height:132px;background:linear-gradient(90deg,#EAE8E2,#F2F2EE 25%,#F7F8F6 45%,#FDFEFA 65%,#FAFAF4)"></div>
<div class="a" style="left:299px;top:442px;width:14px;height:14px;background:linear-gradient(90deg,#C6D6FA,#B8CCF8 60%,#C2D3FA);border-radius:2px;box-shadow:0 0 0 1px #fff,inset 0 -1px 0 #A2B8E2,inset -1px 0 0 #B0C4EA"></div>
<svg style="left:301px;top:446px" width="9" height="6"><path d="M1 5 L4.5 1.5 L8 5" fill="none" stroke="#4D6185" stroke-width="2"/></svg>
<div class="a" style="left:299px;top:459px;width:14px;height:22px;background:linear-gradient(90deg,#C6D6FA,#B8CCF8 60%,#C2D3FA);border-radius:2px;box-shadow:0 0 0 1px #fff,inset 0 -1px 0 #A2B8E2,inset -1px 0 0 #B0C4EA"></div>
<div class="a" style="left:302px;top:466px;width:7px;height:1px;background:#93ABD8"></div>
<div class="a" style="left:302px;top:468px;width:7px;height:1px;background:#93ABD8"></div>
<div class="a" style="left:302px;top:470px;width:7px;height:1px;background:#93ABD8"></div>
<div class="a" style="left:302px;top:472px;width:7px;height:1px;background:#93ABD8"></div>
<div class="a" style="left:299px;top:558px;width:14px;height:14px;background:linear-gradient(90deg,#C6D6FA,#B8CCF8 60%,#C2D3FA);border-radius:2px;box-shadow:0 0 0 1px #fff,inset 0 -1px 0 #A2B8E2,inset -1px 0 0 #B0C4EA"></div>
<svg style="left:301px;top:563px" width="9" height="6"><path d="M1 1 L4.5 4.5 L8 1" fill="none" stroke="#4D6185" stroke-width="2"/></svg>
<div class="a" style="left:4px;top:572px;width:310px;height:33px;background:#ECE6DA;border-top:1px solid #D8D4C8"></div>
<svg style="left:155px;top:573px" width="8" height="6"><path d="M0 0 H8 L4 4Z" fill="#A8A8A0"/></svg>
<svg style="left:13px;top:581px" width="18" height="17"><circle cx="6" cy="3" r="2.3" fill="#F4C898" stroke="#B87840" stroke-width=".7"/><path d="M2 7 Q2 5.5 3.5 5.5 H8.5 Q10 5.5 10 7 V11 H2Z" fill="#E89090" stroke="#A84848" stroke-width=".7"/><rect x="3" y="11" width="6" height="5" fill="#7AA0D8" stroke="#3A5A90" stroke-width=".7"/><circle cx="12" cy="5.5" r="2.3" fill="#F4C898" stroke="#B87840" stroke-width=".7"/><path d="M8 9.5 Q8 8 9.5 8 H14.5 Q16 8 16 9.5 V13 H8Z" fill="#E89090" stroke="#A84848" stroke-width=".7"/><rect x="9" y="13" width="6" height="4" fill="#7AA0D8" stroke="#3A5A90" stroke-width=".7"/></svg>
<div class="a" style="left:39px;top:580px;width:27px;height:20px;background:#fff;border:1px solid #99AFC8;border-radius:4px"></div>
<div class="a" style="left:69px;top:580px;width:27px;height:20px;background:#fff;border:1px solid #99AFC8;border-radius:4px"></div>
<div class="a" style="left:99px;top:580px;width:27px;height:20px;background:#fff;border:1px solid #99AFC8;border-radius:4px"></div>
<div class="a" style="left:129px;top:580px;width:27px;height:20px;background:#fff;border:1px solid #99AFC8;border-radius:4px"></div>
<div class="a" style="left:47px;top:585px;width:11px;height:11px;background:#A8C8F0;border:1px solid #5070A0"></div>
<svg style="left:74px;top:582px" width="18" height="16"><rect x="4.5" y="0.5" width="9" height="9" fill="#A8CCF4" stroke="#3A6294"/><circle cx="5.5" cy="11" r="4" fill="#D8D8D8" stroke="#444"/><text x="3" y="14" font-size="7" font-family="Liberation Sans" font-weight="bold" fill="#222">S</text><circle cx="12.5" cy="10.5" r="4" fill="#F48888" stroke="#B83030"/></svg>
<svg style="left:104px;top:581px" width="16" height="17"><path d="M4.5 7.5 V5 Q4.5 1.2 8 1.2 Q11.5 1.2 11.5 5 V7.5" fill="none" stroke="#6A6A6A" stroke-width="2.4"/><path d="M4.5 7.5 V5 Q4.5 1.2 8 1.2 Q11.5 1.2 11.5 5 V7.5" fill="none" stroke="#E8E8E8" stroke-width=".8"/><rect x="1.5" y="7.5" width="13" height="8" fill="#E8B860" stroke="#7A5010"/><path d="M2 9.5 H14 M2 11.5 H14 M2 13.5 H14" stroke="#B88838" stroke-width="1" shape-rendering="crispEdges"/></svg>
<svg style="left:133px;top:581px" width="18" height="17"><path d="M3 2.5 H6 V9 H8 L4.5 13.5 L1 9 H3Z" fill="#D8ECFA" stroke="#2A4A70" stroke-width="1.1"/><path d="M9.8 7.5 V4 Q9.8 1.5 12 1.5 Q14.2 1.5 14.2 4 V7.5 M9.8 5 H14.2" fill="none" stroke="#2A5A98" stroke-width="2.2"/><path d="M9.5 9.5 H14.5 L10 14.5 H14.8" fill="none" stroke="#B87810" stroke-width="2.2"/></svg>
<svg style="left:163px;top:582px" width="18" height="16"><path d="M2.5 2 H5.5 V8.5 H7.5 L4 13 L0.5 8.5 H2.5Z" fill="#D8ECFA" stroke="#2A4A70" stroke-width="1.1"/><path d="M9 1.5 H16 M9 3.5 H16 M9 5.5 H14 M9 7.5 H16 M9 9.5 H16 M9 11.5 H16 M9 13.5 H13" stroke="#333" stroke-width="1" stroke-dasharray="2 .6" shape-rendering="crispEdges"/></svg>
<svg style="left:6px;top:613px" width="13" height="11"><rect x="4.5" y="0.5" width="7" height="6" fill="#F8F8F8" stroke="#111"/><path d="M4 1.5 H12" stroke="#111" stroke-width="2"/><rect x="0.5" y="3.5" width="7" height="6" fill="#F8F8F8" stroke="#111"/><path d="M0 4.5 H8" stroke="#111" stroke-width="2"/></svg>
<svg style="left:27px;top:610px" width="17" height="16"><rect x="0.5" y="0.5" width="15" height="13" fill="#E8EEF6" stroke="#6E7888"/><path d="M1 2.5 H15" stroke="#8CA4C0" stroke-width="3"/><path d="M1.5 13 L2.5 9 L3.5 12 L4.5 9 L5.5 13" fill="none" stroke="#2A4A7A"/><circle cx="10" cy="8.5" r="3.4" fill="#B8DCF8" stroke="#2A3440" stroke-width="1.3"/><path d="M12.5 11 L15.5 14.5" stroke="#111" stroke-width="2"/></svg>
<div class="t" style="left:47px;top:612px;">Tasks</div>
<div class="a" style="left:88px;top:610px;width:1px;height:18px;background:#A8A594"></div>
<div class="a" style="left:89px;top:610px;width:1px;height:18px;background:#fff"></div>
<svg style="left:95px;top:613px" width="13" height="11"><rect x="4.5" y="0.5" width="7" height="6" fill="#F8F8F8" stroke="#111"/><path d="M4 1.5 H12" stroke="#111" stroke-width="2"/><rect x="0.5" y="3.5" width="7" height="6" fill="#F8F8F8" stroke="#111"/><path d="M0 4.5 H8" stroke="#111" stroke-width="2"/></svg>
<svg style="left:116px;top:610px" width="17" height="17"><rect x="0.5" y="0.5" width="14" height="13" fill="#EEF2F8" stroke="#6E7888"/><path d="M1 2 H14" stroke="#9AB0CC" stroke-width="2" stroke-dasharray="2 1"/><path d="M5 6 L6 10 Q5 14 9.5 14.5 Q14.5 14.5 14.5 11.5 Q14.5 8.5 10 8.5 Q7.5 8.5 6.5 9.5Z" fill="#F0B050" stroke="#A86010"/><path d="M8 11.5 H12" stroke="#fff"/></svg>
<div class="t" style="left:136px;top:612px;">Output</div>
<div class="a" style="left:0px;top:630px;width:1094px;height:1px;background:#A8A594"></div>
<div class="a" style="left:0px;top:631px;width:1094px;height:1px;background:#fff"></div>
<div class="a" style="left:1009px;top:636px;width:1px;height:14px;background:#A8A594"></div>
<div class="a" style="left:1010px;top:636px;width:1px;height:14px;background:#fff"></div>
<div class="a" style="left:1070px;top:636px;width:1px;height:14px;background:#A8A594"></div>
<div class="a" style="left:1071px;top:636px;width:1px;height:14px;background:#fff"></div>
<div class="t" style="left:1030px;top:636px;">1 | 1</div>
<div class="t" style="left:1074px;top:636px;">INS</div>
<div class="a" style="left:319px;top:81px;width:774px;height:525px;border:1px solid #7A9BB8;background:#ECE6DA"></div>
<div class="a" style="left:320px;top:81px;width:772px;height:1px;background:#7A9BB8"></div>
<div class="a" style="left:319px;top:63px;width:122px;height:18px;background:linear-gradient(#FBFBF9,#E6E4DA);border:1px solid #7A9BB8;border-bottom:none;border-radius:3px 3px 0 0"></div>
<svg style="left:325px;top:65px" width="14" height="16"><path d="M0.5 0.5 H9 L12.5 4 V14.5 H0.5Z" fill="#E8EEF6" stroke="#555"/><circle cx="6.5" cy="8.5" r="3.5" fill="#3E9A4A" stroke="#2D5E98"/></svg>
<div class="t" style="left:343px;top:67px;">template.xhtml</div>
<svg style="left:427px;top:71px" width="8" height="8"><path d="M1 1 L6 6 M6 1 L1 6" stroke="#222" stroke-width="1.7"/></svg>
<div class="a" style="left:440px;top:63px;width:100px;height:20px;background:linear-gradient(#FFFFFF 40%,#ECE6DA);border:1px solid #7A9BB8;border-top:none;border-bottom:none;border-radius:3px 3px 0 0"></div>
<div class="a" style="left:440px;top:63px;width:100px;height:3px;background:linear-gradient(#EE9A2A,#FFC83C);border-radius:3px 3px 0 0"></div>
<svg style="left:445px;top:65px" width="14" height="16"><path d="M0.5 0.5 H9 L12.5 4 V14.5 H0.5Z" fill="#E8EEF6" stroke="#555"/><path d="M6 3 L9 6 L6 9 L3 6Z" fill="#E8B050" stroke="#9A6A20" stroke-width=".7"/><rect x="2.5" y="7" width="4" height="4" fill="#8AB0E0" stroke="#3E5E90" stroke-width=".7"/><circle cx="8.5" cy="9.5" r="2.5" fill="#F07878" stroke="#B03030" stroke-width=".7"/></svg>
<div class="t" style="left:463px;top:67px;">Sprint.java</div>
<svg style="left:528px;top:71px" width="8" height="8"><path d="M1 1 L6 6 M6 1 L1 6" stroke="#222" stroke-width="1.7"/></svg>
<div class="a" style="left:1019px;top:63px;width:33px;height:16px;background:linear-gradient(#FFFFFF,#EEF0F4);border:1px solid #98AECB;border-radius:3px"></div>
<div class="a" style="left:1035px;top:64px;width:1px;height:14px;background:#D0DAE6"></div>
<svg style="left:1024px;top:67px" width="6" height="9"><path d="M5 0.5 V8 L1 4.25Z" fill="#9A9A9A"/></svg>
<svg style="left:1040px;top:67px" width="6" height="9"><path d="M1 0.5 V8 L5 4.25Z" fill="#9A9A9A"/></svg>
<div class="a" style="left:1056px;top:63px;width:16px;height:16px;background:linear-gradient(#FFFFFF,#E8ECF2);border:1.5px solid #1C4A86;border-radius:3px"></div>
<svg style="left:1059px;top:69px" width="10" height="6"><path d="M0 0 H10 L5 5Z" fill="#111"/></svg>
<div class="a" style="left:1076px;top:63px;width:16px;height:16px;background:linear-gradient(#FFFFFF,#E8ECF2);border:1.5px solid #1C4A86;border-radius:3px"></div>
<div class="a" style="left:1079px;top:66px;width:10px;height:10px;border:1.5px solid #111"></div>
<div class="a" style="left:320px;top:82px;width:772px;height:29px;background:#ECE6DA"></div>
<div class="a" style="left:320px;top:82px;width:120px;height:1px;background:#fff"></div>
<div class="a" style="left:540px;top:82px;width:552px;height:1px;background:#fff"></div>
<div class="a" style="left:320px;top:111px;width:772px;height:1px;background:#7A9BB8"></div>
<div class="a" style="left:320px;top:87px;width:51px;height:23px;background:#fff;border:1px solid #7A9BB8;border-radius:5px"></div>
<div class="t" style="left:328px;top:92px;">Source</div>
<div class="t" style="left:378px;top:92px;">History</div>
<div class="a" style="left:425px;top:89px;width:1px;height:19px;background:#C5C1AD"></div>
<div class="a" style="left:426px;top:89px;width:1px;height:19px;background:#F8F7F2"></div>
<svg style="left:432px;top:91px" width="19" height="16"><rect x="0.5" y="0.5" width="14" height="14" fill="#F4F6FA" stroke="#4A5464"/><path d="M3 3 H6 M4.5 3 V12 M3 12 H6" stroke="#333"/><path d="M7.5 7.5 L11 4 V6 H16 Q18 6 18 8 V11 H16 V9.5 Q16 9 15.5 9 H11 V11Z" fill="#F6B040" stroke="#A86010" stroke-width=".9"/></svg>
<svg style="left:455px;top:89px" width="18" height="17"><rect x="0.5" y="0.5" width="14" height="14" fill="#C8CDC8" stroke="#B0B5B0"/><path d="M15 10 H8 M10.5 7 L7.5 10 L10.5 13" fill="none" stroke="#B8C4A8" stroke-width="2.2"/></svg>
<svg style="left:476px;top:96px" width="6" height="4"><path d="M0 0 H6 L3 3Z" fill="#777"/></svg>
<svg style="left:485px;top:89px" width="18" height="17"><rect x="0.5" y="0.5" width="14" height="14" fill="#C8CDC8" stroke="#B0B5B0"/><path d="M3 10 H10 M7.5 7 L10.5 10 L7.5 13" fill="none" stroke="#B8C4A8" stroke-width="2.2"/></svg>
<svg style="left:506px;top:96px" width="6" height="4"><path d="M0 0 H6 L3 3Z" fill="#777"/></svg>
<div class="a" style="left:520px;top:89px;width:1px;height:19px;background:#C5C1AD"></div>
<div class="a" style="left:521px;top:89px;width:1px;height:19px;background:#F8F7F2"></div>
<svg style="left:529px;top:90px" width="18" height="18"><rect x="1.5" y="1.5" width="11" height="6" fill="#F4BE6A" stroke="#9A5E10"/><path d="M12.5 12 L16.5 16" stroke="#1A1A1A" stroke-width="2.4"/><circle cx="9" cy="8.5" r="4.2" fill="#D4E8FA" stroke="#2A3A50" stroke-width="1.3"/></svg>
<svg style="left:552px;top:90px" width="19" height="18"><rect x="1.5" y="1.5" width="11" height="6" fill="#F4BE6A" stroke="#9A5E10"/><path d="M4 10.5 L8.5 5.5 V8 H16.5 V13 H8.5 V15.5Z" fill="#BFDDF8" stroke="#1E4E9A" stroke-width="1.2"/></svg>
<svg style="left:576px;top:90px" width="19" height="18"><rect x="4.5" y="1.5" width="11" height="6" fill="#F4BE6A" stroke="#9A5E10"/><path d="M12.5 10.5 L8 5.5 V8 H0.5 V13 H8 V15.5Z" fill="#BFDDF8" stroke="#1E4E9A" stroke-width="1.2"/></svg>
<div class="a" style="left:596px;top:87px;width:23px;height:23px;background:#fff;border:1px solid #8EA8C8;border-radius:3px"></div>
<svg style="left:598px;top:90px" width="19" height="18"><rect x="1.5" y="1.5" width="11" height="6" fill="#F4BE6A" stroke="#9A5E10"/><rect x="5.5" y="9.5" width="11" height="6" fill="#C8C8C8" stroke="#3A3A3A"/><path d="M2 8 L5 14 M13 2 L16 9" stroke="#555" stroke-dasharray="1 1"/></svg>
<svg style="left:621px;top:90px" width="19" height="18"><rect x="1.5" y="1.5" width="12" height="10" fill="none" stroke="#111" stroke-dasharray="1 1" shape-rendering="crispEdges"/><path d="M8.5 7.5 L17 12 L13 13 L11 16.5Z" fill="#6A7888" stroke="#3A4454" stroke-width=".8"/></svg>
<div class="a" style="left:645px;top:89px;width:1px;height:19px;background:#C5C1AD"></div>
<div class="a" style="left:646px;top:89px;width:1px;height:19px;background:#F8F7F2"></div>
<svg style="left:652px;top:90px" width="18" height="17"><path d="M6.5 2.5 L11.5 8 H8.8 V15.5 H4.2 V8 H1.5Z" fill="#FCD088" stroke="#9A5A10" stroke-width="1.2"/><path d="M8 4 L10 1 H15 L17 3.8 L15 6.6 H10Z" fill="#B8D8F4" stroke="#2A5490" stroke-width="1.1"/></svg>
<svg style="left:675px;top:90px" width="19" height="17"><path d="M6.5 13.5 L11.5 8 H8.8 V1 H4.2 V8 H1.5Z" fill="#FCD088" stroke="#9A5A10" stroke-width="1.2"/><path d="M8 11.5 L10 8.7 H15 L17 11.5 L15 14.3 H10Z" fill="#B8D8F4" stroke="#2A5490" stroke-width="1.1"/></svg>
<svg style="left:698px;top:90px" width="19" height="17"><path d="M1 1 H8 L10.5 4 L8 7 H1Z" fill="#A8A8A0"/><path d="M8 9 H15 L17.5 12 L15 15 H8Z" fill="#A8A8A0"/><path d="M3 8 L6 11" stroke="#A8A8A0" stroke-dasharray="1 1"/></svg>
<div class="a" style="left:723px;top:89px;width:1px;height:19px;background:#C5C1AD"></div>
<div class="a" style="left:724px;top:89px;width:1px;height:19px;background:#F8F7F2"></div>
<svg style="left:730px;top:91px" width="17" height="17"><path d="M1 5 L6 0.8 V3 H11 V7 H6 V9.2Z" fill="#C4E0FA" stroke="#1E4E9A" stroke-width="1.1"/><path d="M12 1.5 H16 M12 3.5 H16 M12 5.5 H16 M12 7.5 H16 M12 9.5 H16 M2 12.5 H16 M2 14.5 H16" stroke="#444" shape-rendering="crispEdges"/></svg>
<svg style="left:753px;top:91px" width="17" height="17"><path d="M11 5 L6 0.8 V3 H1 V7 H6 V9.2Z" fill="#C4E0FA" stroke="#1E4E9A" stroke-width="1.1"/><path d="M12 1.5 H16 M12 3.5 H16 M12 5.5 H16 M12 7.5 H16 M12 9.5 H16 M2 12.5 H16 M2 14.5 H16" stroke="#444" shape-rendering="crispEdges"/></svg>
<div class="a" style="left:777px;top:89px;width:1px;height:19px;background:#C5C1AD"></div>
<div class="a" style="left:778px;top:89px;width:1px;height:19px;background:#F8F7F2"></div>
<svg style="left:785px;top:92px" width="14" height="14"><defs><radialGradient id="rr" cx=".4" cy=".35" r=".7"><stop offset="0" stop-color="#FFC8C0"/><stop offset="1" stop-color="#F07068"/></radialGradient></defs><circle cx="7" cy="7" r="6" fill="url(#rr)" stroke="#D05050"/></svg>
<svg style="left:808px;top:92px" width="14" height="14"><defs><linearGradient id="sq" x1="0" y1="0" x2="1" y2="1"><stop offset="0" stop-color="#E8E8E8"/><stop offset="1" stop-color="#A8A8A8"/></linearGradient></defs><rect x="1.5" y="1.5" width="11" height="11" fill="url(#sq)" stroke="#707070"/></svg>
<div class="a" style="left:831px;top:89px;width:1px;height:19px;background:#C5C1AD"></div>
<div class="a" style="left:832px;top:89px;width:1px;height:19px;background:#F8F7F2"></div>
<svg style="left:838px;top:91px" width="17" height="17"><path d="M2.5 9 L5 2 L8 8 L10.5 1.5" fill="none" stroke="#2E9A10" stroke-width="2.2"/><path d="M3 9 L5 2.5 L8 8.5 L10 2" fill="none" stroke="#B0F080" stroke-width=".8"/><path d="M11 5.5 H16 M11 7.5 H16 M1 10.5 H16 M1 12.5 H16 M1 14.5 H16" stroke="#444" shape-rendering="crispEdges"/></svg>
<svg style="left:861px;top:91px" width="17" height="17"><path d="M11 4.5 H16 M11 6.5 H16 M11 8.5 H16 M1 10.5 H16 M1 12.5 H16 M1 14.5 H16" stroke="#111" stroke-width="1" shape-rendering="crispEdges"/><path d="M1 11.5 H16 M1 13.5 H16 M11 5.5 H16 M11 7.5 H16" stroke="#666" shape-rendering="crispEdges"/></svg>
<div class="a" style="left:320px;top:112px;width:35px;height:476px;background:#E6E5DE"></div>
<div class="a" style="left:354px;top:112px;width:1px;height:476px;background:#CFCEC4"></div>
<div class="a" style="left:355px;top:112px;width:707px;height:476px;background:#fff"></div>
<div class="a" style="left:320px;top:112px;width:742px;height:476px;overflow:hidden">
<div class="t" style="left:0;top:-2px;width:31px;text-align:right;line-height:13px;color:#000">51</div>
<div class="c" style="left:58px;top:-3px"><span class="g"> */</span></div>
<div class="t" style="left:0;top:15px;width:31px;text-align:right;line-height:13px;color:#000">52</div>
<div class="c" style="left:58px;top:14px">@Entity</div>
<div class="t" style="left:0;top:32px;width:31px;text-align:right;line-height:13px;color:#000">53</div>
<div class="c" style="left:58px;top:31px">@Table(name = <span class="s">"sprints"</span>, uniqueConstraints = @UniqueConstraint(columnNames = {<span class="s">"name"</span>, <span class="s">"project_id"</span>}))</div>
<div class="t" style="left:0;top:49px;width:31px;text-align:right;line-height:13px;color:#000">54</div>
<div class="c" style="left:58px;top:48px">@NamedQueries({@NamedQuery(name = <span class="s">"sprint.countByNameAndProject"</span>, query = <span class="s">"select count(s) from Sprint s"</span>),</div>
<div class="t" style="left:0;top:66px;width:31px;text-align:right;line-height:13px;color:#000">55</div>
<div class="c" style="left:58px;top:65px">        @NamedQuery(name = <span class="s">"sprint.new.countByNameAndProject"</span>, query = <span class="s">"select count(s) from Sprint s"</span>)})</div>
<div class="c" style="left:58px;top:82px"><span class="k">public</span> <span class="k">class</span> <b style="text-decoration:underline wavy #E0D000;text-decoration-thickness:1px;text-underline-offset:2px">Sprint</b> <span class="k">extends</span> AbstractEntity <span class="k">implements</span> Serializable {</div>
<div class="t" style="left:0;top:100px;width:31px;text-align:right;line-height:13px;color:#000">57</div>
<div class="c" style="left:58px;top:99px"></div>
<div class="t" style="left:0;top:117px;width:31px;text-align:right;line-height:13px;color:#000">58</div>
<div class="c" style="left:58px;top:116px">    <span class="k">private</span> <span class="k">static</span> <span class="k">final</span> <span class="k">long</span> <span class="i">serialVersionUID</span> = 1L;</div>
<div class="t" style="left:0;top:134px;width:31px;text-align:right;line-height:13px;color:#000">59</div>
<div class="c" style="left:58px;top:133px">    @Column(nullable = <span class="k">false</span>)</div>
<div class="t" style="left:0;top:151px;width:31px;text-align:right;line-height:13px;color:#000">60</div>
<div class="c" style="left:58px;top:150px">    <span class="k">private</span> String <span class="f">name</span>;</div>
<div class="t" style="left:0;top:168px;width:31px;text-align:right;line-height:13px;color:#000">61</div>
<div class="c" style="left:58px;top:167px">    <span class="k">private</span> String <span class="f">goals</span>;</div>
<div class="t" style="left:0;top:185px;width:31px;text-align:right;line-height:13px;color:#000">62</div>
<div class="c" style="left:58px;top:184px">    @Temporal(TemporalType.<span class="i">DATE</span>)</div>
<div class="t" style="left:0;top:202px;width:31px;text-align:right;line-height:13px;color:#000">63</div>
<div class="c" style="left:58px;top:201px">    @Column(name = <span class="s">"start_date"</span>, nullable = <span class="k">false</span>)</div>
<div class="t" style="left:0;top:219px;width:31px;text-align:right;line-height:13px;color:#000">64</div>
<div class="c" style="left:58px;top:218px">    <span class="k">private</span> Date <span class="f">startDate</span>;</div>
<div class="t" style="left:0;top:236px;width:31px;text-align:right;line-height:13px;color:#000">65</div>
<div class="c" style="left:58px;top:235px">    @Temporal(TemporalType.<span class="i">DATE</span>)</div>
<div class="t" style="left:0;top:253px;width:31px;text-align:right;line-height:13px;color:#000">66</div>
<div class="c" style="left:58px;top:252px">    @Column(name = <span class="s">"end_date"</span>)</div>
<div class="t" style="left:0;top:270px;width:31px;text-align:right;line-height:13px;color:#000">67</div>
<div class="c" style="left:58px;top:269px">    <span class="k">private</span> Date <span class="f">endDate</span>;</div>
<div class="t" style="left:0;top:287px;width:31px;text-align:right;line-height:13px;color:#000">68</div>
<div class="c" style="left:58px;top:286px">    @Column(name = <span class="s">"iteration_scope"</span>)</div>
<div class="t" style="left:0;top:304px;width:31px;text-align:right;line-height:13px;color:#000">69</div>
<div class="c" style="left:58px;top:303px">    <span class="k">private</span> <span class="k">int</span> <span class="f">iterationScope</span>;</div>
<div class="t" style="left:0;top:321px;width:31px;text-align:right;line-height:13px;color:#000">70</div>
<div class="c" style="left:58px;top:320px">    @Column(name = <span class="s">"gained_story_points"</span>)</div>
<div class="t" style="left:0;top:338px;width:31px;text-align:right;line-height:13px;color:#000">71</div>
<div class="c" style="left:58px;top:337px">    <span class="k">private</span> <span class="k">int</span> <span class="f">gainedStoryPoints</span>;</div>
<div class="t" style="left:0;top:355px;width:31px;text-align:right;line-height:13px;color:#000">72</div>
<div class="c" style="left:58px;top:354px">    @Temporal(TemporalType.<span class="i">TIME</span>)</div>
<div class="t" style="left:0;top:372px;width:31px;text-align:right;line-height:13px;color:#000">73</div>
<div class="c" style="left:58px;top:371px">    @Column(name = <span class="s">"daily_meeting_time"</span>)</div>
<div class="t" style="left:0;top:389px;width:31px;text-align:right;line-height:13px;color:#000">74</div>
<div class="c" style="left:58px;top:388px">    <span class="k">private</span> Date <span class="f">dailyMeetingTime</span>;</div>
<div class="t" style="left:0;top:406px;width:31px;text-align:right;line-height:13px;color:#000">75</div>
<div class="c" style="left:58px;top:405px">    @OneToMany(mappedBy = <span class="s">"sprint"</span>, cascade = CascadeType.<span class="i">ALL</span>)</div>
<div class="t" style="left:0;top:423px;width:31px;text-align:right;line-height:13px;color:#000">76</div>
<div class="c" style="left:58px;top:422px">    <span class="k">private</span> List&lt;Story&gt; <span class="f">stories</span>;</div>
<div class="t" style="left:0;top:440px;width:31px;text-align:right;line-height:13px;color:#000">77</div>
<div class="c" style="left:58px;top:439px">    @ManyToOne</div>
<div class="t" style="left:0;top:457px;width:31px;text-align:right;line-height:13px;color:#000">78</div>
<div class="c" style="left:58px;top:456px">    @JoinColumn(name = <span class="s">"project_id"</span>)</div>
</div>
<div class="a" style="left:1017px;top:112px;width:1px;height:476px;background:#F4B8B8"></div>
<div class="a" style="left:361px;top:112px;width:1px;height:5px;background:#555"></div>
<div class="a" style="left:361px;top:116px;width:5px;height:1px;background:#555"></div>
<svg style="left:342px;top:195px" width="14" height="14"><defs><radialGradient id="bl" cx=".45" cy=".4" r=".6"><stop offset="0" stop-color="#FFFBD0"/><stop offset="1" stop-color="#F0B820"/></radialGradient></defs><path d="M6 1 Q10.5 1 10.5 5.5 Q10.5 8 8.5 9.5 V10.5 H3.5 V9.5 Q1.5 8 1.5 5.5 Q1.5 1 6 1Z" fill="url(#bl)" stroke="#B08000"/><rect x="3.5" y="10.5" width="4" height="2.5" fill="#8898B8" stroke="#4A5878" stroke-width=".6"/><path d="M10 6.5 L13.5 13 H6.5Z" fill="#F8D020" stroke="#8A6A00" stroke-width=".9"/><path d="M10 8.5 V11 M10 12 V12.6" stroke="#000" stroke-width=".9"/></svg>
<div class="a" style="left:1062px;top:112px;width:16px;height:476px;background:linear-gradient(90deg,#EAE8E2,#F2F2EE 25%,#F7F8F6 45%,#FDFEFA 65%,#FAFAF4)"></div>
<div class="a" style="left:1063px;top:113px;width:14px;height:14px;background:linear-gradient(90deg,#C6D6FA,#B8CCF8 60%,#C2D3FA);border-radius:2px;box-shadow:0 0 0 1px #fff,inset 0 -1px 0 #A2B8E2,inset -1px 0 0 #B0C4EA"></div>
<svg style="left:1065px;top:117px" width="9" height="6"><path d="M1 5 L4.5 1.5 L8 5" fill="none" stroke="#4D6185" stroke-width="2"/></svg>
<div class="a" style="left:1063px;top:229px;width:14px;height:54px;background:linear-gradient(90deg,#C6D6FA,#B8CCF8 60%,#C2D3FA);border-radius:2px;box-shadow:0 0 0 1px #fff,inset 0 -1px 0 #A2B8E2,inset -1px 0 0 #B0C4EA"></div>
<div class="a" style="left:1066px;top:252px;width:7px;height:1px;background:#93ABD8"></div>
<div class="a" style="left:1066px;top:254px;width:7px;height:1px;background:#93ABD8"></div>
<div class="a" style="left:1066px;top:256px;width:7px;height:1px;background:#93ABD8"></div>
<div class="a" style="left:1066px;top:258px;width:7px;height:1px;background:#93ABD8"></div>
<div class="a" style="left:1063px;top:573px;width:14px;height:14px;background:linear-gradient(90deg,#C6D6FA,#B8CCF8 60%,#C2D3FA);border-radius:2px;box-shadow:0 0 0 1px #fff,inset 0 -1px 0 #A2B8E2,inset -1px 0 0 #B0C4EA"></div>
<svg style="left:1065px;top:578px" width="9" height="6"><path d="M1 1 L4.5 4.5 L8 1" fill="none" stroke="#4D6185" stroke-width="2"/></svg>
<div class="a" style="left:1078px;top:112px;width:14px;height:476px;background:#ECE6DA"></div>
<div class="a" style="left:1081px;top:119px;width:8px;height:8px;background:#E8C020;border:1px solid #C8A010"></div>
<div class="a" style="left:1082px;top:137px;width:7px;height:1px;background:#555"></div>
<div class="a" style="left:1084px;top:136px;width:1px;height:3px;background:#555"></div>
<div class="a" style="left:1080px;top:212px;width:11px;height:2px;background:#F0B020"></div>
<div class="a" style="left:1080px;top:240px;width:11px;height:2px;background:#F0B020"></div>
<div class="a" style="left:377px;top:588px;width:685px;height:17px;background:linear-gradient(#EAE8E2,#F2F2EE 25%,#F7F8F6 45%,#FDFEFA 65%,#FAFAF4)"></div>
<div class="a" style="left:378px;top:590px;width:14px;height:13px;background:linear-gradient(#C6D6FA,#B8CCF8 60%,#C2D3FA);border-radius:2px;box-shadow:0 0 0 1px #fff,inset 0 -1px 0 #A2B8E2,inset -1px 0 0 #B0C4EA"></div>
<svg style="left:382px;top:592px" width="6" height="9"><path d="M5 1 L1.5 4.5 L5 8" fill="none" stroke="#4D6185" stroke-width="2"/></svg>
<div class="a" style="left:394px;top:590px;width:300px;height:13px;background:linear-gradient(#C6D6FA,#B8CCF8 60%,#C2D3FA);border-radius:2px;box-shadow:0 0 0 1px #fff,inset 0 -1px 0 #A2B8E2,inset -1px 0 0 #B0C4EA"></div>
<div class="a" style="left:540px;top:593px;width:1px;height:7px;background:#93ABD8"></div>
<div class="a" style="left:542px;top:593px;width:1px;height:7px;background:#93ABD8"></div>
<div class="a" style="left:544px;top:593px;width:1px;height:7px;background:#93ABD8"></div>
<div class="a" style="left:546px;top:593px;width:1px;height:7px;background:#93ABD8"></div>
<div class="a" style="left:1047px;top:590px;width:14px;height:13px;background:linear-gradient(#C6D6FA,#B8CCF8 60%,#C2D3FA);border-radius:2px;box-shadow:0 0 0 1px #fff,inset 0 -1px 0 #A2B8E2,inset -1px 0 0 #B0C4EA"></div>
<svg style="left:1052px;top:592px" width="6" height="9"><path d="M1 1 L4.5 4.5 L1 8" fill="none" stroke="#4D6185" stroke-width="2"/></svg>
<div class="a" style="left:320px;top:588px;width:57px;height:17px;background:#E6E5DE"></div>
<div class="a" style="left:1062px;top:588px;width:30px;height:17px;background:#ECE6DA"></div>
</body></html>
